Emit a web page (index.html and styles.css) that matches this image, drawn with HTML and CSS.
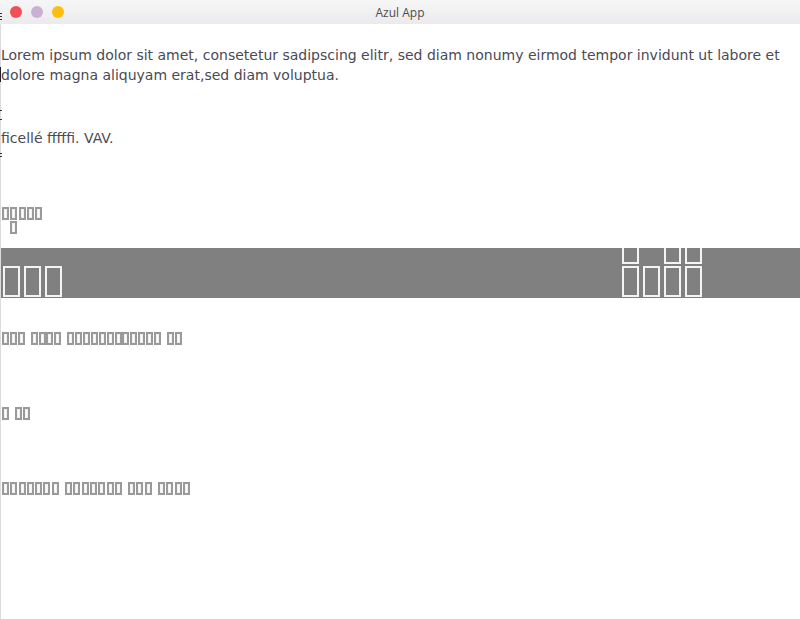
FILE: index.html
```html
<!DOCTYPE html>
<html>
<head>
<meta charset="utf-8">
<link rel="stylesheet" href="styles.css">
</head>
<body>
<div class="window">
  <div class="titlebar">
    <div class="lights">
      <span class="light red"></span>
      <span class="light purple"></span>
      <span class="light yellow"></span>
    </div>
    <div class="title">Azul App</div>
  </div>
  <div class="content">
    <p class="text lorem">Lorem ipsum dolor sit amet, consetetur sadipscing elitr, sed diam nonumy eirmod tempor invidunt ut labore et dolore magna aliquyam erat,sed diam voluptua.</p>
    <p class="text fic">ficellé fffffi. VAV.</p>
    <div class="row r1"><span class="t"></span><span class="t"></span><span class="t"></span><span class="t"></span><span class="t"></span></div>
    <div class="row r2"><span class="t"></span></div>
    <div class="bar">
      <div class="big-left"><span class="b"></span><span class="b"></span><span class="b"></span></div>
      <div class="big-right">
        <div class="brow"><span class="b"></span><span class="b hidden"></span><span class="b"></span><span class="b"></span></div>
        <div class="brow"><span class="b"></span><span class="b"></span><span class="b"></span><span class="b"></span></div>
      </div>
    </div>
    <div class="row r3"><span class="t"></span><span class="t"></span><span class="t"></span><span class="sp"></span><span class="t"></span><span class="t"></span><span class="t"></span><span class="t"></span><span class="sp"></span><span class="t"></span><span class="t"></span><span class="t"></span><span class="t"></span><span class="t"></span><span class="t"></span><span class="t"></span><span class="t"></span><span class="t"></span><span class="t"></span><span class="t"></span><span class="t"></span><span class="sp"></span><span class="t"></span><span class="t"></span></div>
    <div class="row r4"><span class="t"></span><span class="sp"></span><span class="t"></span><span class="t"></span></div>
    <div class="row r5"><span class="t"></span><span class="t"></span><span class="t"></span><span class="t"></span><span class="t"></span><span class="t"></span><span class="t"></span><span class="sp"></span><span class="t"></span><span class="t"></span><span class="t"></span><span class="t"></span><span class="t"></span><span class="t"></span><span class="t"></span><span class="sp"></span><span class="t"></span><span class="t"></span><span class="t"></span><span class="sp"></span><span class="t"></span><span class="t"></span><span class="t"></span><span class="t"></span></div>
  </div>
  <div class="edge-marks">
    <span class="mark m1"></span>
    <span class="mark m2"></span>
    <span class="mark m3"></span>
    <span class="mark m4"></span>
    <span class="mark m5"></span>
  </div>
</div>
</body>
</html>
```
FILE: styles.css
```css
html, body {
  margin: 0;
  padding: 0;
  background: #ffffff;
  overflow: hidden;
}
.window {
  width: 800px;
  height: 619px;
  display: flex;
  flex-direction: column;
  position: relative;
}
.titlebar {
  height: 24px;
  flex: none;
  background: linear-gradient(#f6f6f7, #ebebed);
  position: relative;
  display: flex;
  align-items: center;
  justify-content: center;
}
.lights {
  position: absolute;
  left: 10px;
  top: 6px;
  display: flex;
  gap: 9px;
}
.light {
  width: 12px;
  height: 12px;
  border-radius: 50%;
  display: block;
}
.red { background: #f25056; }
.purple { background: #cbb0d6; }
.yellow { background: #fdbd0e; }
.title {
  font-family: "Open Sans", "DejaVu Sans", sans-serif;
  font-size: 12px;
  color: #4d4d4d;
}
.content {
  flex: 1;
  border-left: 1px solid #dcdcdc;
  display: flex;
  flex-direction: column;
}
.text {
  margin: 0;
  font-family: "DejaVu Sans", sans-serif;
  font-size: 14px;
  line-height: 20px;
  color: #4a4a55;
}
.lorem { margin-top: 21px; }
.fic { margin-top: 43px; }
.row {
  display: flex;
  align-items: flex-start;
  height: 12px;
}
.t {
  width: 7px;
  height: 13px;
  box-sizing: border-box;
  border: 2px solid #9a9a9a;
  box-shadow: inset 0 0 0 1px #f2f2f2;
  margin-right: 1.3px;
  flex: none;
}
.sp { width: 5px; flex: none; }
.r1 { margin-top: 59px; padding-left: 1px; }
.r2 { margin-top: 2px; padding-left: 9px; }
.r3 { margin-top: 34px; padding-left: 1px; }
.r3 .t { margin-right: 0.9px; }
.r4 { margin-top: 63px; padding-left: 1px; }
.r4 .t { margin-right: 1px; }
.r5 { margin-top: 63px; padding-left: 1px; }
.bar {
  margin-top: 15px;
  height: 50px;
  flex: none;
  background: #808080;
  display: flex;
  align-items: flex-end;
  overflow: hidden;
  padding-bottom: 1px;
  box-sizing: border-box;
}
.big-left {
  display: flex;
  gap: 4px;
  padding-left: 2px;
}
.b {
  width: 17px;
  height: 31px;
  box-sizing: border-box;
  border: 2px solid #f4f4f4;
  flex: none;
  display: block;
}
.b.hidden { border-color: transparent; }
.big-right {
  margin-left: auto;
  margin-right: 98px;
  display: flex;
  flex-direction: column;
  gap: 2px;
}
.brow {
  display: flex;
  gap: 4px;
}
.edge-marks {
  position: absolute;
  left: 0;
  top: 0;
  width: 2px;
  height: 619px;
  pointer-events: none;
}
.mark {
  position: absolute;
  left: 0;
  width: 2px;
  background: repeating-linear-gradient(#333 0 1px, transparent 1px 3px);
}
.m1 { top: 13px; height: 9px; }
.m2 { top: 67px; height: 15px; background: #222; width: 1px; }
.m3 { top: 110px; height: 2px; }
.m4 { top: 119px; height: 3px; }
.m5 { top: 153px; height: 6px; }
```
